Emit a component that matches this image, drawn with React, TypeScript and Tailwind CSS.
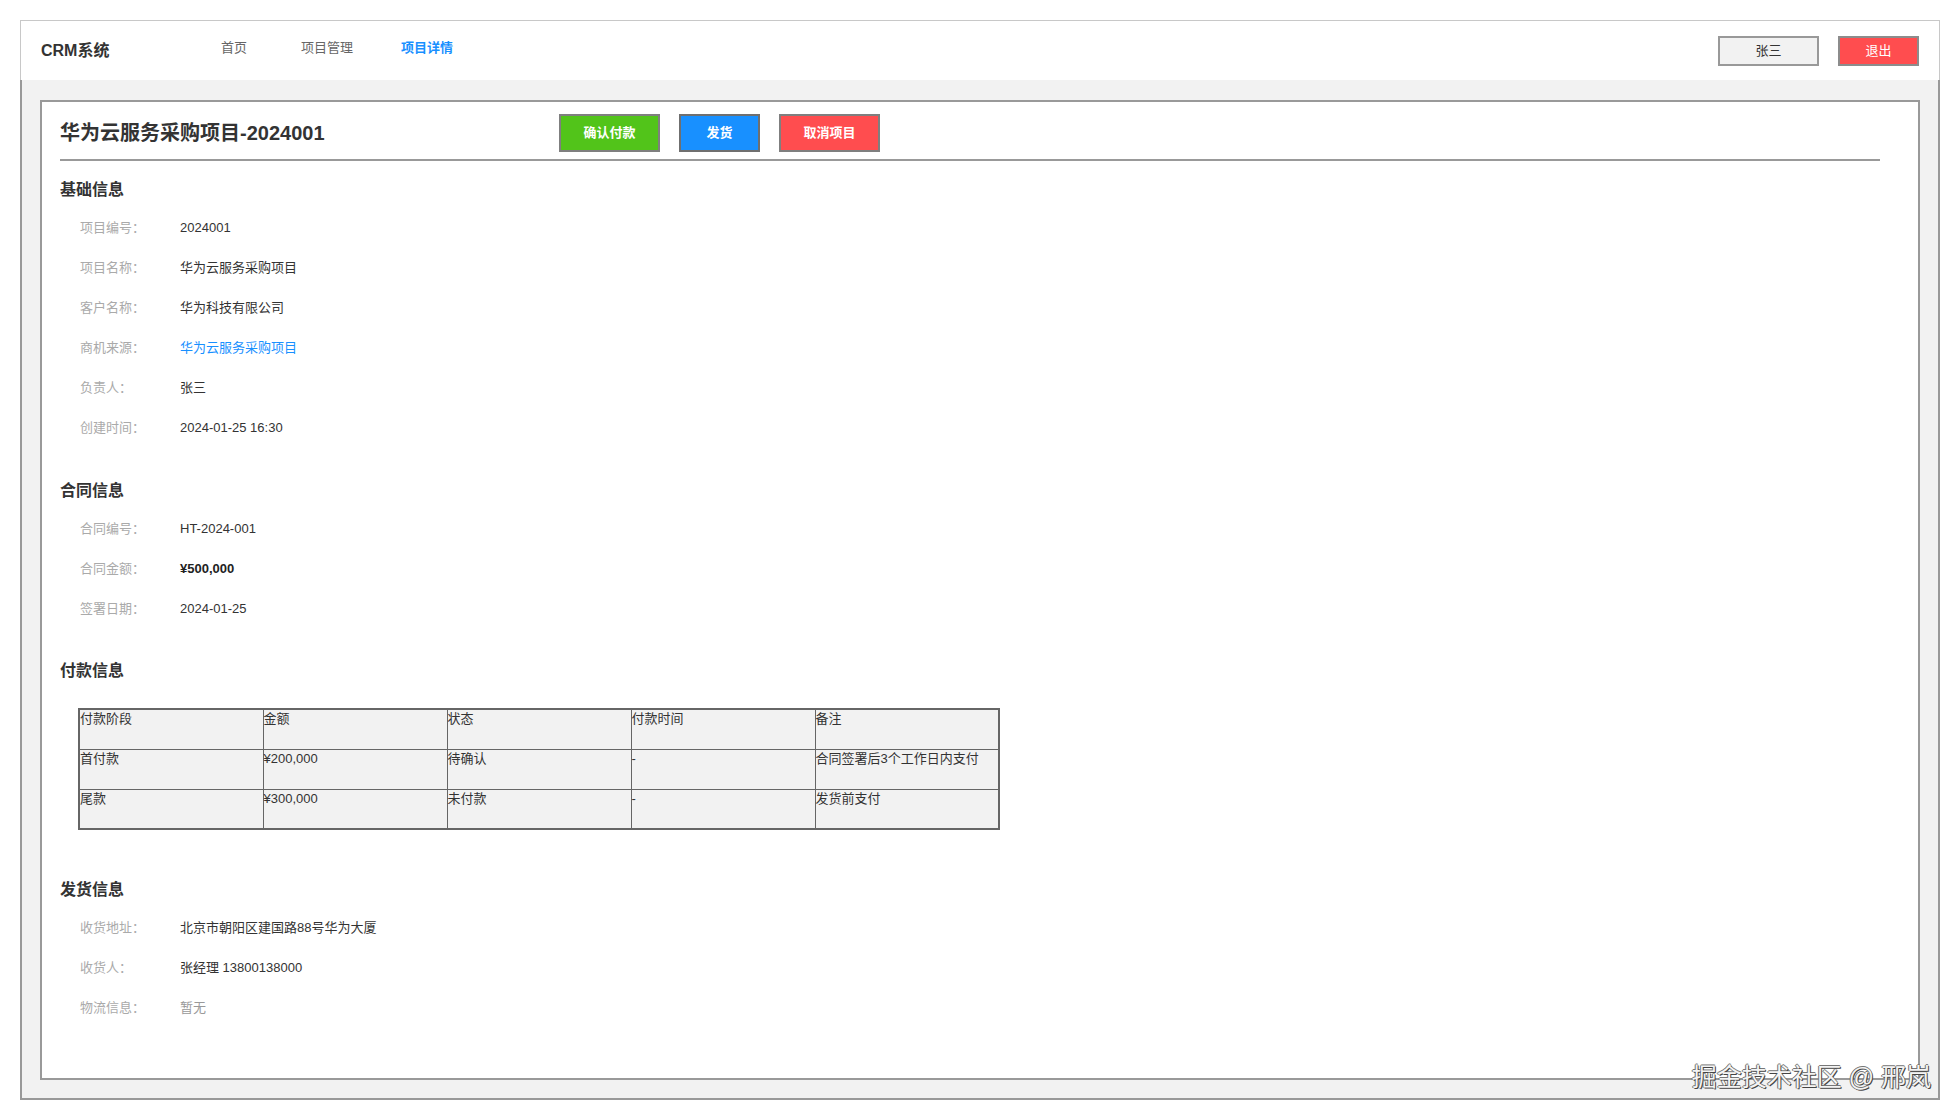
import React from "react";

const font = "font-['Liberation_Sans','Noto_Sans_CJK_SC',sans-serif]";

type Row = { label: string; value: string; tone?: "link" | "muted" | "bold" };

const basic: Row[] = [
  { label: "项目编号：", value: "2024001" },
  { label: "项目名称：", value: "华为云服务采购项目" },
  { label: "客户名称：", value: "华为科技有限公司" },
  { label: "商机来源：", value: "华为云服务采购项目", tone: "link" },
  { label: "负责人：", value: "张三" },
  { label: "创建时间：", value: "2024-01-25 16:30" },
];

const contract: Row[] = [
  { label: "合同编号：", value: "HT-2024-001" },
  { label: "合同金额：", value: "¥500,000", tone: "bold" },
  { label: "签署日期：", value: "2024-01-25" },
];

const shipping: Row[] = [
  { label: "收货地址：", value: "北京市朝阳区建国路88号华为大厦" },
  { label: "收货人：", value: "张经理 13800138000" },
  { label: "物流信息：", value: "暂无", tone: "muted" },
];

const payments = [
  ["付款阶段", "金额", "状态", "付款时间", "备注"],
  ["首付款", "¥200,000", "待确认", "-", "合同签署后3个工作日内支付"],
  ["尾款", "¥300,000", "未付款", "-", "发货前支付"],
];

function SectionTitle({ children }: { children: React.ReactNode }) {
  return <h3 className="text-[16px] font-bold leading-[22px] text-[#333]">{children}</h3>;
}

function InfoRows({ rows }: { rows: Row[] }) {
  return (
    <div className="mt-[7px]">
      {rows.map((r) => (
        <div key={r.label} className="flex h-10 items-center pl-5 text-[13px] leading-[18px]">
          <span className="w-[100px] text-[#aaa]">{r.label}</span>
          <span
            className={
              r.tone === "link"
                ? "text-[#1890ff]"
                : r.tone === "muted"
                  ? "text-[#999]"
                  : r.tone === "bold"
                    ? "font-semibold text-[#222]"
                    : "text-[#333]"
            }
          >
            {r.value}
          </span>
        </div>
      ))}
    </div>
  );
}

export default function App() {
  return (
    <div className={`relative h-[1120px] w-[1960px] bg-white p-5 ${font}`}>
      <div className="flex h-[1080px] w-[1920px] flex-col">
        {/* top bar */}
        <header className="flex h-[60px] shrink-0 items-center border-x border-t border-[#c8c8c8] bg-white px-5">
          <div className="w-[180px] text-[16px] font-bold text-[#333]">CRM系统</div>
          <nav className="-mt-[5px] flex items-center text-[13px] text-[#666]">
            <a className="mr-[54px]">首页</a>
            <a className="mr-[48px]">项目管理</a>
            <a className="font-bold text-[#1890ff]">项目详情</a>
          </nav>
          <div className="ml-auto flex items-center gap-[19px] text-[13px]">
            <button className="h-[30px] w-[101px] border-2 border-[#999] bg-[#f2f2f2] text-[#333]">张三</button>
            <button className="h-[30px] w-[81px] border-2 border-[#8c8c8c] bg-[#ff4d4f] text-white">退出</button>
          </div>
        </header>

        <main className="flex-1 border-x-2 border-b-2 border-[#999] bg-[#f2f2f2] px-[18px] pb-[18px] pt-5">
          <div className="h-full border-2 border-[#999] bg-white pl-[18px] pr-[38px] pt-3">
            {/* title bar */}
            <div className="flex items-center border-b-2 border-[#999] pb-[7px]">
              <h1 className="w-[499px] text-[20px] font-bold leading-[38px] text-[#333]">华为云服务采购项目-2024001</h1>
              <div className="flex gap-[19px] text-[13px] font-bold text-white">
                <button className="h-[38px] w-[101px] border-2 border-[#7f7f7f] bg-[#52c41a]">确认付款</button>
                <button className="h-[38px] w-[81px] border-2 border-[#6f6f6f] bg-[#1890ff]">发货</button>
                <button className="h-[38px] w-[101px] border-2 border-[#7f7f7f] bg-[#ff4d4f]">取消项目</button>
              </div>
            </div>

            <section className="mt-[18px]">
              <SectionTitle>基础信息</SectionTitle>
              <InfoRows rows={basic} />
            </section>

            <section className="mt-[32px]">
              <SectionTitle>合同信息</SectionTitle>
              <InfoRows rows={contract} />
            </section>

            <section className="mt-[31px]">
              <SectionTitle>付款信息</SectionTitle>
              <div className="ml-[18px] mt-[26px]">
                <table className="w-[922px] table-fixed border-collapse border-2 border-[#666] text-[13px] leading-[18px] text-[#333]">
                  <tbody>
                    {payments.map((row, i) => (
                      <tr key={i} className="h-10">
                        {row.map((cell, j) => (
                          <td key={j} className="border border-[#666] bg-[#f2f2f2] p-0 align-top">
                            {cell}
                          </td>
                        ))}
                      </tr>
                    ))}
                  </tbody>
                </table>
              </div>
            </section>

            <section className="mt-[49px]">
              <SectionTitle>发货信息</SectionTitle>
              <InfoRows rows={shipping} />
            </section>
          </div>
        </main>
      </div>

      <div className="pointer-events-none absolute bottom-[30px] right-[29px] text-[25px] leading-[25px] text-[#f4f4f4] [text-shadow:1px_1px_0_#444,-1px_0_0_#777,0_-1px_0_#777,0_0_1px_#333]">
        掘金技术社区 @ 邢岚
      </div>
    </div>
  );
}
